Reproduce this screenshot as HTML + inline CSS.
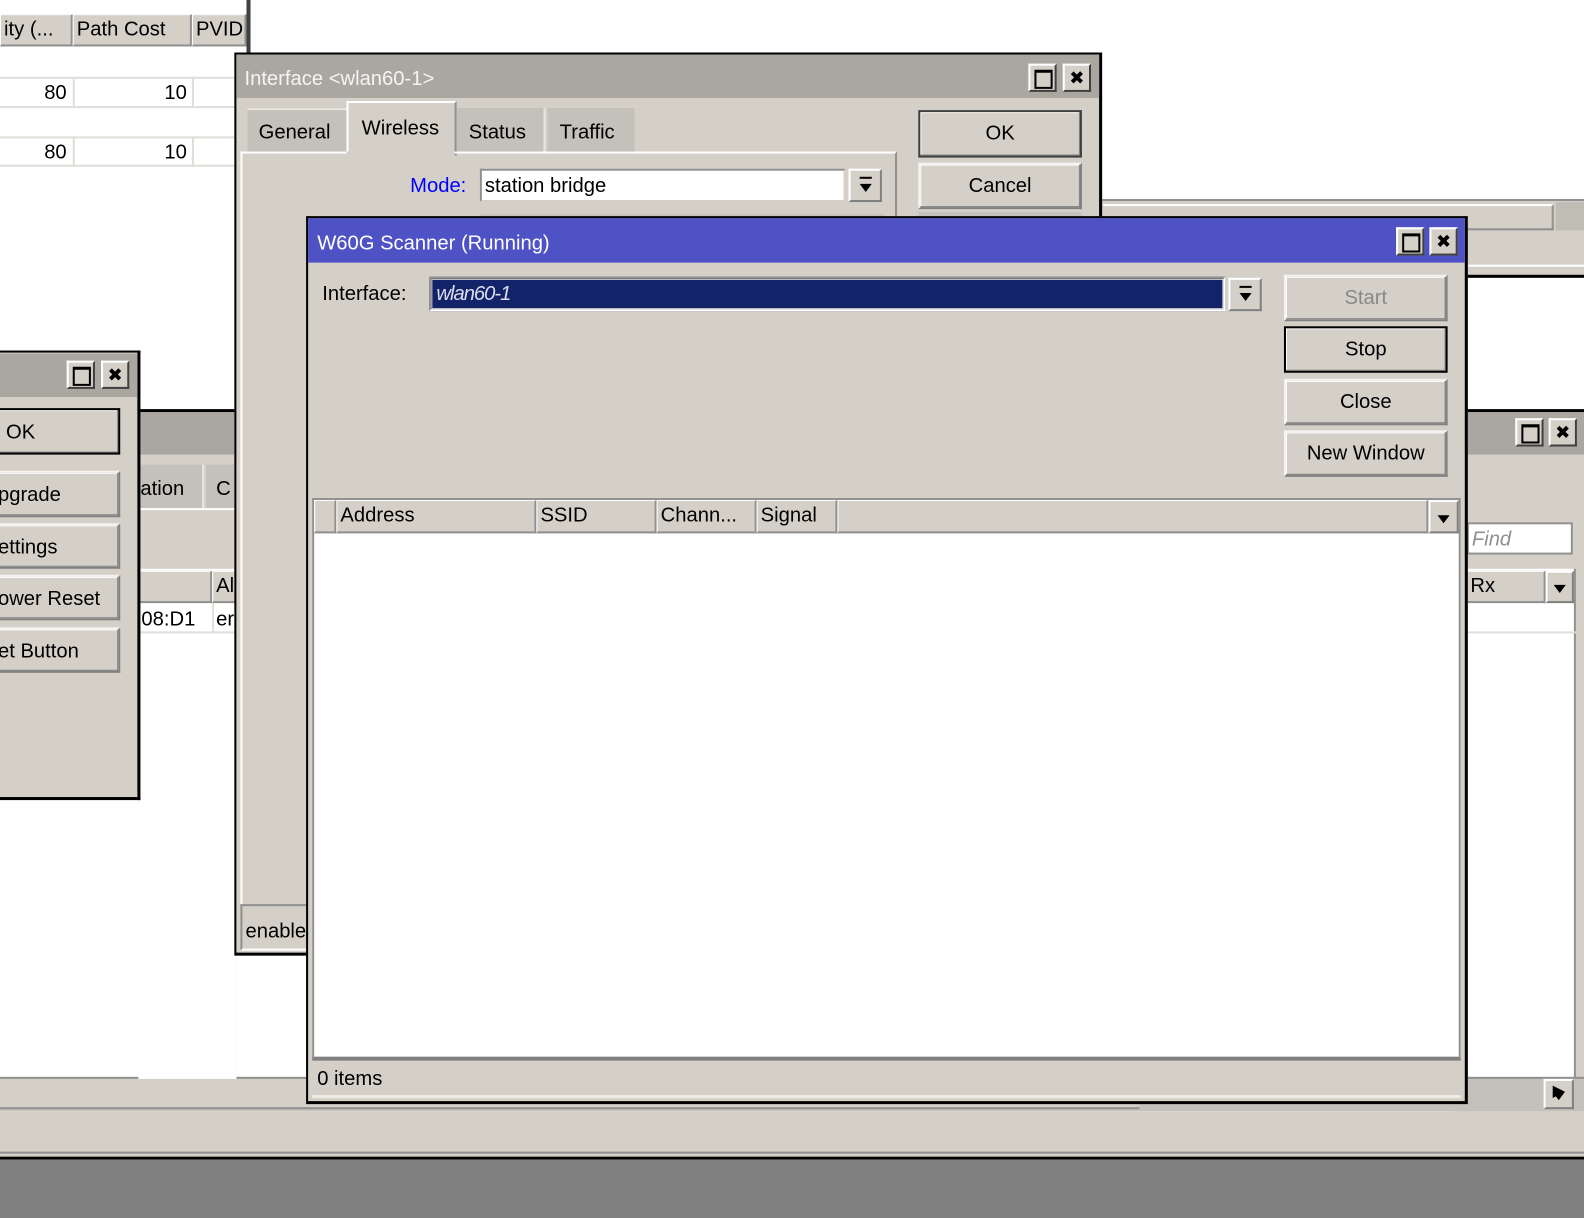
<!DOCTYPE html>
<html><head><meta charset="utf-8"><style>
html,body{margin:0;padding:0;width:1584px;height:1218px;overflow:hidden;background:#fff}
#r{position:absolute;left:0;top:0;width:1568px;height:1206px;transform:scale(1.0102);transform-origin:0 0;font-family:"Liberation Sans","DejaVu Sans",sans-serif;font-size:20px;color:#000}
.a{position:absolute;box-sizing:border-box}
.g{background:#d4d0c8}
.t{white-space:nowrap;line-height:1}
.btn{position:absolute;box-sizing:border-box;background:#d4d0c8;border:2px solid #808080;border-top-color:#f4f3ef;border-left-color:#f4f3ef;box-shadow:inset -1px -1px 0 #808080,inset 1px 1px 0 #fff;text-align:center;white-space:nowrap}
.wb{position:absolute;box-sizing:border-box;width:28px;height:28px;background:#d4d0c8;border:2px solid #404040;border-top-color:#fff;border-left-color:#fff}
.sq::after{content:"";position:absolute;left:4px;top:4px;width:14px;height:14px;border:2px solid #000;border-top-width:3px}
.x::after{content:"✖";position:absolute;left:0;top:0;width:24px;text-align:center;font-size:18px;line-height:24px}
.hd{position:absolute;box-sizing:border-box;background:#d4d0c8;border-right:2px solid #909090;border-bottom:2px solid #909090;border-left:1px solid #fff;border-top:1px solid #fff;padding-left:3px;white-space:nowrap;line-height:28px}
.dd{position:absolute;box-sizing:border-box;background:#d4d0c8;border:2px solid #808080;border-top-color:#fff;border-left-color:#fff}
.dd::after{content:"";position:absolute;left:50%;top:50%;margin-left:-6px;margin-top:-2px;border-left:6px solid transparent;border-right:6px solid transparent;border-top:8px solid #000}
.cb::before{content:"";position:absolute;left:50%;margin-left:-6px;top:6px;width:12px;height:2px;background:#000}
</style></head><body><div id="r">

<!-- top-left table -->
<div class="a" style="left:0;top:0;width:246px;height:300px;background:#fff"></div>
<div class="a g" style="left:0;top:14px;width:246px;height:32px;border-bottom:2px solid #909090"></div>
<div class="hd" style="left:0;top:14px;width:72px;height:32px">ity (...</div>
<div class="hd" style="left:72px;top:14px;width:118px;height:32px">Path Cost</div>
<div class="hd" style="left:190px;top:14px;width:54px;height:32px">PVID</div>
<div class="a" style="left:244px;top:0;width:4px;height:60px;background:#404040"></div>
<div class="a" style="left:0;top:76px;width:234px;height:31px;border-top:2px solid #e0ded8;border-bottom:2px solid #e0ded8"></div>
<div class="a" style="left:72px;top:76px;width:2px;height:31px;background:#e0ded8"></div>
<div class="a" style="left:190px;top:76px;width:2px;height:31px;background:#e0ded8"></div>
<div class="a t" style="left:0;top:82px;width:66px;text-align:right">80</div>
<div class="a t" style="left:72px;top:82px;width:113px;text-align:right">10</div>
<div class="a" style="left:0;top:135px;width:234px;height:30px;border-top:2px solid #e0ded8;border-bottom:2px solid #e0ded8"></div>
<div class="a" style="left:72px;top:135px;width:2px;height:30px;background:#e0ded8"></div>
<div class="a" style="left:190px;top:135px;width:2px;height:30px;background:#e0ded8"></div>
<div class="a t" style="left:0;top:141px;width:66px;text-align:right">80</div>
<div class="a t" style="left:72px;top:141px;width:113px;text-align:right">10</div>

<!-- right background window strip -->
<div class="a g" style="left:1090px;top:197px;width:478px;height:78px;border-top:2px solid #909090;border-bottom:3px solid #000"></div>
<div class="a" style="left:1092px;top:202px;width:446px;height:26px;border:2px solid #909090;border-top-color:#fff;border-left:none"></div>
<div class="a" style="left:1540px;top:200px;width:28px;height:28px;background:#c0bdb5"></div>
<div class="a" style="left:1452px;top:262px;width:116px;height:2px;background:#fff"></div>

<!-- right lower window -->
<div class="a g" style="left:1440px;top:405px;width:128px;height:700px;border-top:3px solid #000"></div>
<div class="a" style="left:1440px;top:408px;width:128px;height:42px;background:#a9a7a0"></div>
<div class="wb sq" style="left:1500px;top:414px"></div>
<div class="wb x" style="left:1533px;top:414px"></div>
<div class="a" style="left:1452px;top:517px;width:105px;height:32px;background:#fff;border:2px solid #909090;border-top-color:#909090"></div>
<div class="a t" style="left:1457px;top:524px;color:#909090;font-style:italic">Find</div>
<div class="a" style="left:1446px;top:563px;width:114px;height:505px;background:#fff;border-left:2px solid #909090;border-right:2px solid #909090"></div>
<div class="hd" style="left:1446px;top:565px;width:84px;height:32px">&nbsp;Rx</div>
<div class="dd" style="left:1530px;top:565px;width:28px;height:32px"></div>
<div class="a" style="left:1446px;top:597px;width:114px;height:30px;border-bottom:2px solid #e0ded8"></div>

<!-- bottom background areas -->
<div class="a g" style="left:0;top:1066px;width:1568px;height:34px;border-top:2px solid #909090;background:#c4c1ba"></div>
<div class="a g" style="left:0;top:1068px;width:1128px;height:30px;border-bottom:2px solid #909090"></div>
<div class="dd" style="left:1528px;top:1068px;width:30px;height:30px"></div>
<div class="a t" style="left:1537px;top:1073px;font-size:16px">▶</div>
<div class="a g" style="left:0;top:1100px;width:1568px;height:46px;border-bottom:3px solid #e8e6e0"></div>
<div class="a" style="left:0;top:1140px;width:1568px;height:6px;background:#d4d0c8;border-top:2px solid #909090"></div>
<div class="a" style="left:0;top:1145px;width:1568px;height:3px;background:#000"></div>
<div class="a" style="left:0;top:1148px;width:1568px;height:58px;background:#808080"></div>

<!-- middle-left background window -->
<div class="a g" style="left:137px;top:405px;width:97px;height:663px;border-top:3px solid #000"></div>
<div class="a" style="left:137px;top:408px;width:97px;height:42px;background:#a9a7a0"></div>
<div class="a" style="left:137px;top:460px;width:65px;height:44px;background:#c4c1ba;border-right:2px solid #e8e6e0"></div>
<div class="a t" style="left:139px;top:474px">ation</div>
<div class="a" style="left:204px;top:460px;width:30px;height:44px;background:#c4c1ba"></div>
<div class="a t" style="left:214px;top:474px">C</div>
<div class="a" style="left:137px;top:503px;width:97px;height:2px;background:#fff"></div>
<div class="a" style="left:137px;top:563px;width:97px;height:505px;background:#fff"></div>
<div class="hd" style="left:137px;top:565px;width:73px;height:32px"></div>
<div class="hd" style="left:210px;top:565px;width:30px;height:32px">Al</div>
<div class="a" style="left:137px;top:597px;width:97px;height:30px;border-bottom:2px solid #e0ded8"></div>
<div class="a" style="left:210px;top:597px;width:2px;height:30px;background:#e0ded8"></div>
<div class="a t" style="left:140px;top:603px">08:D1</div>
<div class="a t" style="left:214px;top:603px">er</div>

<!-- left small window -->
<div class="a g" style="left:0;top:347px;width:139px;height:445px;border:3px solid #000;border-left:none;border-top-width:2px"></div>
<div class="a" style="left:0;top:350px;width:136px;height:43px;background:#a9a7a0"></div>
<div class="wb sq" style="left:66px;top:357px"></div>
<div class="wb x" style="left:100px;top:357px"></div>
<div class="btn" style="left:-4px;top:404px;width:123px;height:46px;border:2px solid #000;text-align:left;padding:12px 0 0 8px;line-height:1">OK</div>
<div class="btn" style="left:-4px;top:466px;width:123px;height:46px;text-align:left;padding:12px 0 0 0;line-height:1">pgrade</div>
<div class="btn" style="left:-4px;top:518px;width:123px;height:45px;text-align:left;padding:12px 0 0 0;line-height:1">ettings</div>
<div class="btn" style="left:-4px;top:569px;width:123px;height:45px;text-align:left;padding:12px 0 0 0;line-height:1">ower Reset</div>
<div class="btn" style="left:-4px;top:621px;width:123px;height:45px;text-align:left;padding:12px 0 0 0;line-height:1">et Button</div>

<!-- Interface window -->
<div class="a g" style="left:232px;top:52px;width:859px;height:894px;border:3px solid #000;border-left-width:2px;border-top-width:2px"></div>
<div class="a" style="left:234px;top:54px;width:854px;height:43px;background:#a9a7a0"></div>
<div class="a t" style="left:242px;top:68px;color:#f4f4f4">Interface &lt;wlan60-1&gt;</div>
<div class="wb sq" style="left:1018px;top:63px"></div>
<div class="wb x" style="left:1052px;top:63px"></div>
<div class="a" style="left:245px;top:107px;width:98px;height:45px;background:#c4c1ba;border-top:2px solid #e8e6e0"></div>
<div class="a t" style="left:256px;top:121px">General</div>
<div class="a g" style="left:343px;top:100px;width:109px;height:54px;border:2px solid #fff;border-bottom:none;border-right-color:#909090"></div>
<div class="a t" style="left:358px;top:117px">Wireless</div>
<div class="a" style="left:452px;top:107px;width:88px;height:45px;background:#c4c1ba;border-right:2px solid #e8e6e0"></div>
<div class="a t" style="left:464px;top:121px">Status</div>
<div class="a" style="left:542px;top:107px;width:86px;height:45px;background:#c4c1ba"></div>
<div class="a t" style="left:554px;top:121px">Traffic</div>
<div class="a" style="left:238px;top:150px;width:650px;height:745px;border-top:2px solid #fff;border-left:2px solid #fff;border-right:2px solid #909090"></div>
<div class="a" style="left:343px;top:150px;width:107px;height:4px;background:#d4d0c8"></div>
<div class="a t" style="left:406px;top:174px;color:#0000ff">Mode:</div>
<div class="a" style="left:475px;top:167px;width:362px;height:33px;background:#fff;border:2px solid #909090;border-right-color:#d4d0c8;border-bottom-color:#d4d0c8"></div>
<div class="a t" style="left:480px;top:174px">station bridge</div>
<div class="dd cb" style="left:840px;top:167px;width:33px;height:33px"></div>
<div class="a" style="left:475px;top:212px;width:400px;height:4px;background:#c4c1ba"></div>
<div class="btn" style="left:909px;top:109px;width:162px;height:47px;border:2px solid #404040;line-height:42px">OK</div>
<div class="btn" style="left:909px;top:161px;width:162px;height:46px;line-height:42px">Cancel</div>
<div class="a" style="left:909px;top:210px;width:162px;height:6px;background:#c4c1ba"></div>
<div class="a" style="left:238px;top:895px;width:70px;height:46px;border:2px solid #909090;border-bottom-color:#fff;border-right:none;padding:14px 0 0 3px" ><span class="t">enable</span></div>

<!-- Scanner window -->
<div class="a g" style="left:303px;top:214px;width:1150px;height:879px;border:3px solid #000;border-left-width:2px;border-top-width:2px"></div>
<div class="a" style="left:305px;top:216px;width:1145px;height:44px;background:#4f52c4"></div>
<div class="a t" style="left:314px;top:231px;color:#fff">W60G Scanner (Running)</div>
<div class="wb sq" style="left:1382px;top:225px"></div>
<div class="wb x" style="left:1415px;top:225px"></div>
<div class="a t" style="left:319px;top:281px">Interface:</div>
<div class="a" style="left:425px;top:274px;width:788px;height:34px;background:#13236a;border:2px solid #909090;border-right-color:#fff;border-bottom-color:#fff;box-shadow:inset 0 0 0 1px #d4d0c8"></div>
<div class="a t" style="left:432px;top:281px;color:#dde;font-style:italic;letter-spacing:-1px">wlan60-1</div>
<div class="dd cb" style="left:1216px;top:275px;width:33px;height:33px"></div>
<div class="btn" style="left:1271px;top:272px;width:162px;height:46px;line-height:42px;color:#888">Start</div>
<div class="btn" style="left:1271px;top:323px;width:162px;height:46px;border:2px solid #000;line-height:42px">Stop</div>
<div class="btn" style="left:1271px;top:375px;width:162px;height:46px;line-height:42px">Close</div>
<div class="btn" style="left:1271px;top:426px;width:162px;height:46px;line-height:42px">New Window</div>
<div class="a" style="left:309px;top:493px;width:1137px;height:557px;background:#fff;border:2px solid #909090;border-top-color:#909090;border-bottom:4px solid #808080"></div>
<div class="hd" style="left:311px;top:495px;width:22px;height:33px"></div>
<div class="hd" style="left:333px;top:495px;width:198px;height:33px">Address</div>
<div class="hd" style="left:531px;top:495px;width:119px;height:33px">SSID</div>
<div class="hd" style="left:650px;top:495px;width:99px;height:33px">Chann...</div>
<div class="hd" style="left:749px;top:495px;width:80px;height:33px">Signal</div>
<div class="hd" style="left:829px;top:495px;width:585px;height:33px"></div>
<div class="dd" style="left:1414px;top:495px;width:30px;height:33px"></div>
<div class="a t" style="left:314px;top:1058px">0 items</div>
<div class="a" style="left:309px;top:1084px;width:1137px;height:3px;background:#ecebe6"></div>

</div></body></html>
